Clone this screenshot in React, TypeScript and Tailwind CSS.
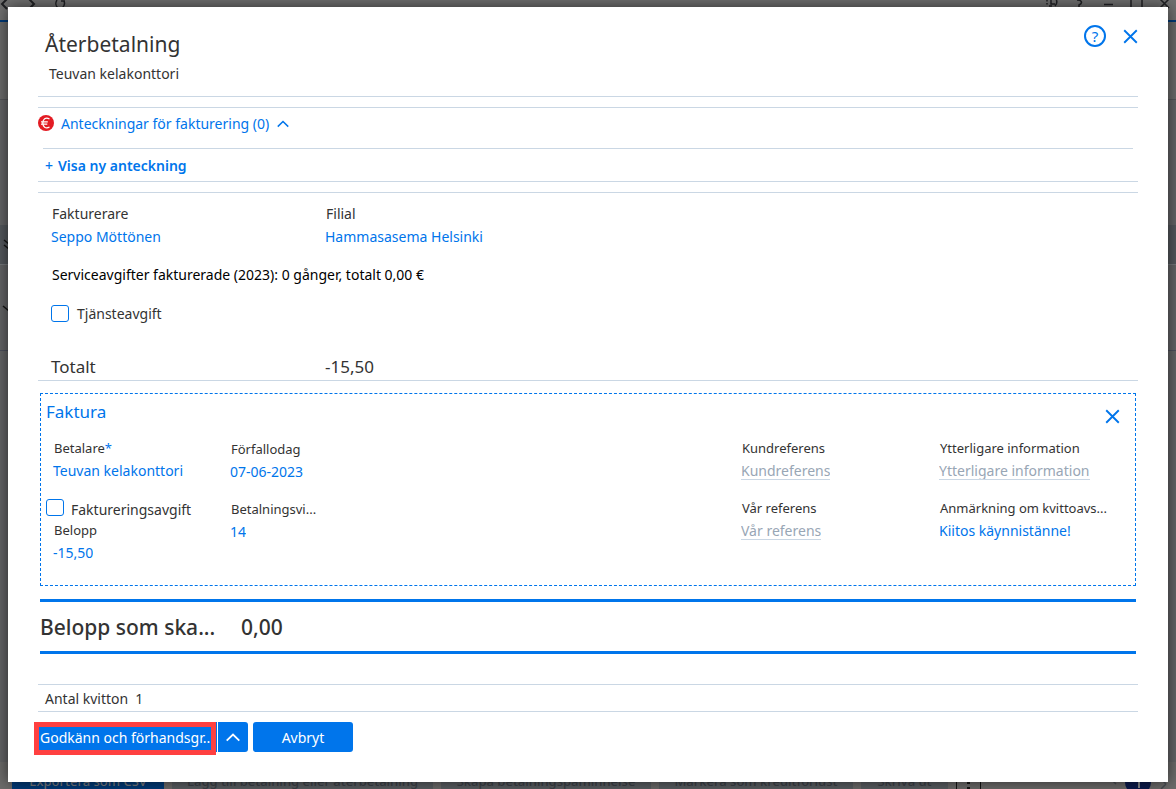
import { useState, type ReactNode } from 'react'
import clsx from 'clsx'

const VALUE = 'block h-6 text-left text-sm leading-6 text-[#0075eb]'

function Cross({ className }: { className?: string }) {
  return (
    <svg viewBox="0 0 16 16" className={clsx('size-4', className)} fill="none" stroke="currentColor" strokeWidth="2">
      <path d="M1.3 1.3 14.7 14.7M14.7 1.3 1.3 14.7" />
    </svg>
  )
}

function Chevron({ className }: { className?: string }) {
  return (
    <svg viewBox="0 0 16 10" className={className} fill="none" stroke="currentColor" strokeWidth="2">
      <path d="M1 8.5 8 1.7 15 8.5" />
    </svg>
  )
}

function Checkbox({ id, children, className }: { id: string; children: ReactNode; className?: string }) {
  return (
    <div className={clsx('flex', className)}>
      <input id={id} type="checkbox"
        className="h-[17px] w-[18px] shrink-0 appearance-none rounded-[3px] border border-[#0075eb] bg-white checked:bg-[#0075eb]" />
      <label htmlFor={id} className="text-sm leading-[18px]">{children}</label>
    </div>
  )
}

type FieldProps = { id: string; label: string; value?: string; required?: boolean }

function Field({ id, label, value, required }: FieldProps) {
  return (
    <div className="min-w-0">
      <label htmlFor={id} className="block whitespace-nowrap pl-px text-[13px] leading-5">
        {label}{required && <span className="text-[#0075eb]">*</span>}
      </label>
      {value ? (
        <input id={id} defaultValue={value} className={clsx(VALUE, 'field-sizing-content mt-px max-w-full')} />
      ) : (
        <input id={id} placeholder={label}
          className="field-sizing-content mt-[3px] block h-[19px] max-w-full border-b border-[#cad7e4] text-sm leading-[18px] placeholder:text-[#98a6b5]" />
      )}
    </div>
  )
}

// The application window, dimmed while the dialog is open
function Backdrop() {
  const actions = ['Lägg till betalning eller återbetalning', 'Skapa betalningspåminnelse', 'Markera som kreditförlust', 'Skriva ut']
  const widths = ['w-[261px]', 'w-[210px]', 'w-[194px]', 'w-[87px]']
  return (
    <div aria-hidden="true" className="col-start-1 row-start-1 flex flex-col overflow-hidden bg-[#636466]">
      <div className="flex h-5 items-start justify-between bg-[#707070] text-[#202124]">
        <svg width="72" height="14" viewBox="0 0 72 14" fill="none" stroke="currentColor" strokeWidth="2">
          <path d="M7-1 2 4l5 5M29-1l5 5-5 5" />
          <path d="M58 8a6 6 0 0 1-1-8M62 8a6 6 0 0 0 2-7M61 1h4" strokeWidth="1.5" />
        </svg>
        <svg width="136" height="14" viewBox="0 0 136 14" fill="none" stroke="currentColor" strokeWidth="1.5">
          <path d="M16-1a6 6 0 0 1-1 7M11-1v5h4M7 0v1.500M7 3v1.500M9 6h3" />
          <path d="M37 0c5 0 6 3 2 5v2" />
          <path d="M64 4.5h9" />
          <path d="M91-3v11h11V-3" />
          <path d="m120-1 9 9M129-1l-9 9" />
        </svg>
      </div>
      <div className="h-0.5 bg-[#003a78]" />
      <div className="h-[78px] border-b border-[#55565a] bg-[#6b6b6b]" />
      <div className="h-[125px] bg-[#636466]" />
      <div className="h-10 border-b border-[#75787c] bg-[#54585d] pt-3">
        <svg width="12" height="14" viewBox="0 0 12 14" fill="none" stroke="#151515" strokeWidth="1.5"><path d="m4 3 5 4 3-3M4 8l5 4 3-3" /></svg>
      </div>
      <div className="h-[86px] border-b border-[#4c4f5c] pt-10">
        <svg width="12" height="8" viewBox="0 0 12 8" fill="none" stroke="#151515" strokeWidth="1.5"><path d="m3 1 6 5 3-3" /></svg>
      </div>
      <div className="grow" />
      <div className="flex h-[27px] items-start gap-2 overflow-hidden bg-[#6c6b6a] pl-3 text-[13px] font-medium text-[#3d4248]">
        <div className="h-7 w-[152px] bg-[#003a78] pt-[9px] text-center leading-5 text-[#75797e]">Exportera som CSV</div>
        {actions.map((a, i) => (
          <div key={a} className={clsx('h-7 truncate bg-[#5a5e62] pt-[9px] text-center leading-5', widths[i])}>{a}</div>
        ))}
        <div className="flex h-7 w-[25px] flex-col items-center gap-[3px] border-x border-[#151515] pt-[19px]">
          <i className="size-[3px] bg-[#151515]" />
          <i className="size-[3px] bg-[#151515]" />
        </div>
        <div className="grow" />
        <svg width="70" height="28" viewBox="0 0 70 28" className="shrink-0">
          <path d="M5 17l5 5M60 22l-5 5M55 17l5 5" fill="none" stroke="#484c52" strokeWidth="1.5" />
          <circle cx="32" cy="20" r="13" fill="#0b1a4d" />
          <path d="M33 18v8" stroke="#85888c" strokeWidth="2" />
        </svg>
      </div>
    </div>
  )
}

export default function App() {
  const [open, setOpen] = useState(true)

  return (
    <div className="grid min-h-screen grid-cols-1 font-['Noto_Sans','Segoe_UI',sans-serif] text-[#333]">
      <Backdrop />
      <div className="z-10 col-start-1 row-start-1 flex px-2 py-[7px]">
        <main role="dialog" aria-labelledby="title" className="grow bg-white px-[30px] shadow-[0_0_14px_rgba(0,0,0,0.6)]">
          <header className="flex h-[90px] justify-between border-b border-[#cad7e4] pt-[21px] pl-[7px]">
            <div>
              <h1 id="title" className="text-[21px] leading-8">Återbetalning</h1>
              <p className="mt-1 pl-1 text-sm leading-5">Teuvan kelakonttori</p>
            </div>
            <div className="-mt-[3px] flex h-[22px] items-center gap-[17px] text-[#0075eb]">
              <button aria-label="Hjälp" className="size-[22px] rounded-full border-2 border-[#0075eb] text-[15px] leading-[18px]">?</button>
              <button aria-label="Stäng"><Cross className="size-[15px]" /></button>
            </div>
          </header>

          <section className="mt-2.5 border-y border-[#cad7e4]">
            <button onClick={() => setOpen(!open)} aria-expanded={open}
              className="flex h-8 items-center text-sm text-[#0075eb]">
              <svg viewBox="0 0 16 16" className="mr-[7px] mb-0.5 size-4" fill="none" stroke="#fff" strokeWidth="1.2">
                <circle cx="8" cy="8" r="8" fill="#e31b23" stroke="none" />
                <path d="M11.5 4C7.500 1.800 4.800 4.500 4.800 8s2.700 6.200 6.700 4M3 6.900h6.800M3 9.200h6.300" />
              </svg>
              Anteckningar för fakturering (0)
              <Chevron className="ml-2 h-2 w-3" />
            </button>
            {open && (
              <div className="mx-[5px] mt-2 flex h-[33px] items-center border-t border-[#cad7e4] pt-0.5">
                <button className="pl-0.5 text-sm font-semibold text-[#0075eb]">
                  <span className="mr-[5px] font-medium">+</span>Visa ny anteckning
                </button>
              </div>
            )}
          </section>

          <section className="mt-2.5 border-y border-[#cad7e4] pt-2.5 pl-[13px]">
            <div className="grid grid-cols-[274px_1fr]">
              <div>
                <div id="biller" className="pl-px text-sm leading-[22px]">Fakturerare</div>
                <button aria-labelledby="biller" className={VALUE}>Seppo Möttönen</button>
              </div>
              <div>
                <div id="branch" className="pl-px text-sm leading-[22px]">Filial</div>
                <button aria-labelledby="branch" className={VALUE}>Hammasasema Helsinki</button>
              </div>
            </div>
            <p className="mt-4 pl-px text-sm leading-5 text-black">Serviceavgifter fakturerade (2023): 0 gånger, totalt 0,00 €</p>
            <Checkbox id="service" className="mt-5 items-start gap-2">Tjänsteavgift</Checkbox>
            <div className="mt-[31px] grid grid-cols-[274px_1fr] text-[17px] leading-[26px]">
              <span>Totalt</span>
              <span>-15,50</span>
            </div>
          </section>

          <section className="mx-0.5 mt-3 h-[193px] border border-dashed border-[#0075eb] pl-[5px]">
            <div className="flex h-11 items-start justify-between pt-[5px] pr-[15px] text-[#0075eb]">
              <h2 className="text-[17px] leading-[26px]">Faktura</h2>
              <button aria-label="Ta bort faktura" className="mt-2.5"><Cross className="size-[15px]" /></button>
            </div>
            <div className="grid grid-cols-[184px_1fr_198px_171px] pr-[25px]">
              <div>
                <div className="pl-[7px]"><Field id="payer" label="Betalare" value="Teuvan kelakonttori" required /></div>
                <Checkbox id="fee" className="mt-4 items-end gap-[7px] [&>input]:mb-[3px]">Faktureringsavgift</Checkbox>
                <div className="mt-px pl-[7px]"><Field id="amount" label="Belopp" value="-15,50" /></div>
              </div>
              <div className="flex flex-col gap-[15px] pt-px">
                <Field id="due" label="Förfallodag" value="07-06-2023" />
                <Field id="terms" label="Betalningsvi..." value="14" />
              </div>
              <div className="flex flex-col gap-[18px]">
                <Field id="customer-ref" label="Kundreferens" />
                <Field id="our-ref" label="Vår referens" />
              </div>
              <div className="flex min-w-0 flex-col gap-[18px]">
                <Field id="info" label="Ytterligare information" />
                <Field id="note" label="Anmärkning om kvittoavs..." value="Kiitos käynnistänne!" />
              </div>
            </div>
          </section>

          <section className="mx-0.5 mt-[13px] flex h-[55px] items-center gap-[25px] border-y-[3px] border-[#0075eb] pt-0.5 text-[21px] font-medium">
            <span className="w-[176px] whitespace-nowrap">Belopp som ska...</span>
            <span>0,00</span>
          </section>

          <footer className="mt-[30px]">
            <p className="flex h-7 items-center gap-[7px] border-y border-[#cad7e4] pt-0.5 pl-[7px] text-sm">
              <span>Antal kvitton</span><span>1</span>
            </p>
            <div className="mt-2.5 flex h-[30px] text-sm text-white">
              <button className="relative w-[179px] bg-[#0075eb] pt-0.5 pr-1 pl-0.5 text-left">
                <span className="block whitespace-nowrap">Godkänn och förhandsgr..</span>
                <span className="absolute top-0 -left-1 h-[33px] w-[182px] border-[5px] border-[#ff4040]" />
              </button>
              <button aria-label="Fler alternativ" className="ml-px flex w-[30px] items-center justify-center rounded-r-[3px] bg-[#0075eb]">
                <Chevron className="h-[9px] w-4" />
              </button>
              <button className="ml-[5px] w-[100px] rounded-[3px] bg-[#0075eb] pt-0.5">Avbryt</button>
            </div>
          </footer>
        </main>
      </div>
    </div>
  )
}
